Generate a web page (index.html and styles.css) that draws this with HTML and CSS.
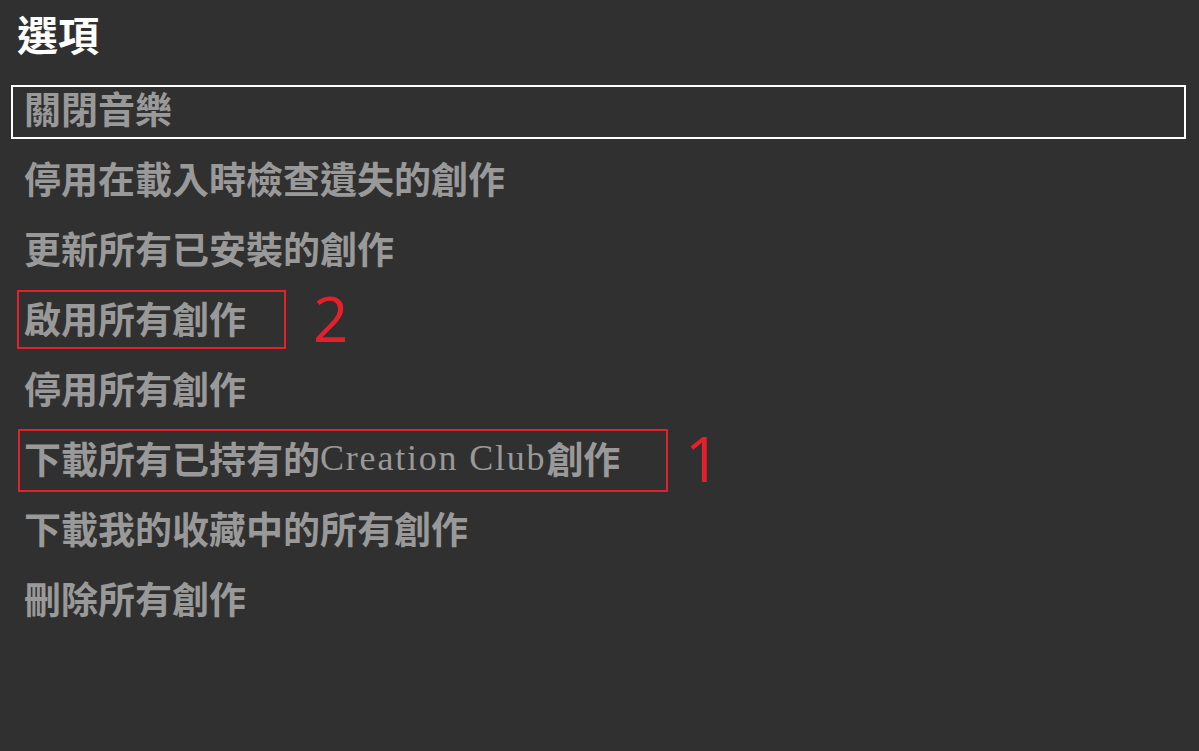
FILE: index.html
```html
<!DOCTYPE html>
<html lang="zh-Hant">
<head>
    <meta charset="UTF-8">
    <meta name="viewport" content="width=device-width, initial-scale=1.0">
    <title>選項</title>
    <link rel="stylesheet" href="styles.css">
</head>
<body>
    <h1 class="title">選項</h1>

    <ul class="options">
        <li class="option selected">關閉音樂</li>
        <li class="option">停用在載入時檢查遺失的創作</li>
        <li class="option">更新所有已安裝的創作</li>
        <li class="option">
            啟用所有創作
            <span class="mark mark-2"></span>
            <span class="mark-num num-2">2</span>
        </li>
        <li class="option">停用所有創作</li>
        <li class="option">
            下載所有已持有的<span class="latin">Creation Club</span>創作
            <span class="mark mark-1"></span>
            <span class="mark-num num-1">1</span>
        </li>
        <li class="option">下載我的收藏中的所有創作</li>
        <li class="option">刪除所有創作</li>
    </ul>
</body>
</html>
```

FILE: styles.css
```css
body {
    margin: 0;
    height: 100vh;
    background-color: #303030;
    font-family: 'Liberation Serif', 'Noto Sans CJK TC', serif;
    overflow: hidden;
}
.title {
    margin: 0;
    padding: 17px 0 0 17px;
    font-size: 41px;
    line-height: 41px;
    font-weight: 700;
    color: #ffffff;
}
.options {
    list-style: none;
    margin: 27px 0 0 11px;
    padding: 0;
    width: 1175px;
    display: flex;
    flex-direction: column;
    gap: 16px;
}
.option {
    position: relative;
    height: 54px;
    box-sizing: border-box;
    border: 2px solid transparent;
    padding: 0 0 8px 11px;
    display: flex;
    align-items: center;
    font-size: 37px;
    font-weight: 700;
    color: #999999;
    white-space: nowrap;
}
.option.selected {
    border-color: #ffffff;
}
.latin {
    font-weight: 400;
    font-size: 36px;
    letter-spacing: 1.8px;
}
/* red annotation boxes */
.mark {
    position: absolute;
    border: 2px solid #e3202b;
    box-sizing: border-box;
}
.mark-2 {
    left: 4px;
    top: -7px;
    width: 269px;
    height: 59px;
}
.mark-1 {
    left: 5px;
    top: -8px;
    width: 650px;
    height: 63px;
}
.mark-num {
    position: absolute;
    font-family: 'Open Sans', 'Noto Sans', sans-serif;
    font-size: 62px;
    line-height: 62px;
    font-weight: 400;
    color: #e3202b;
}
.num-2 {
    left: 300px;
    top: -10px;
}
.num-1 {
    left: 672px;
    top: -10px;
}
```
